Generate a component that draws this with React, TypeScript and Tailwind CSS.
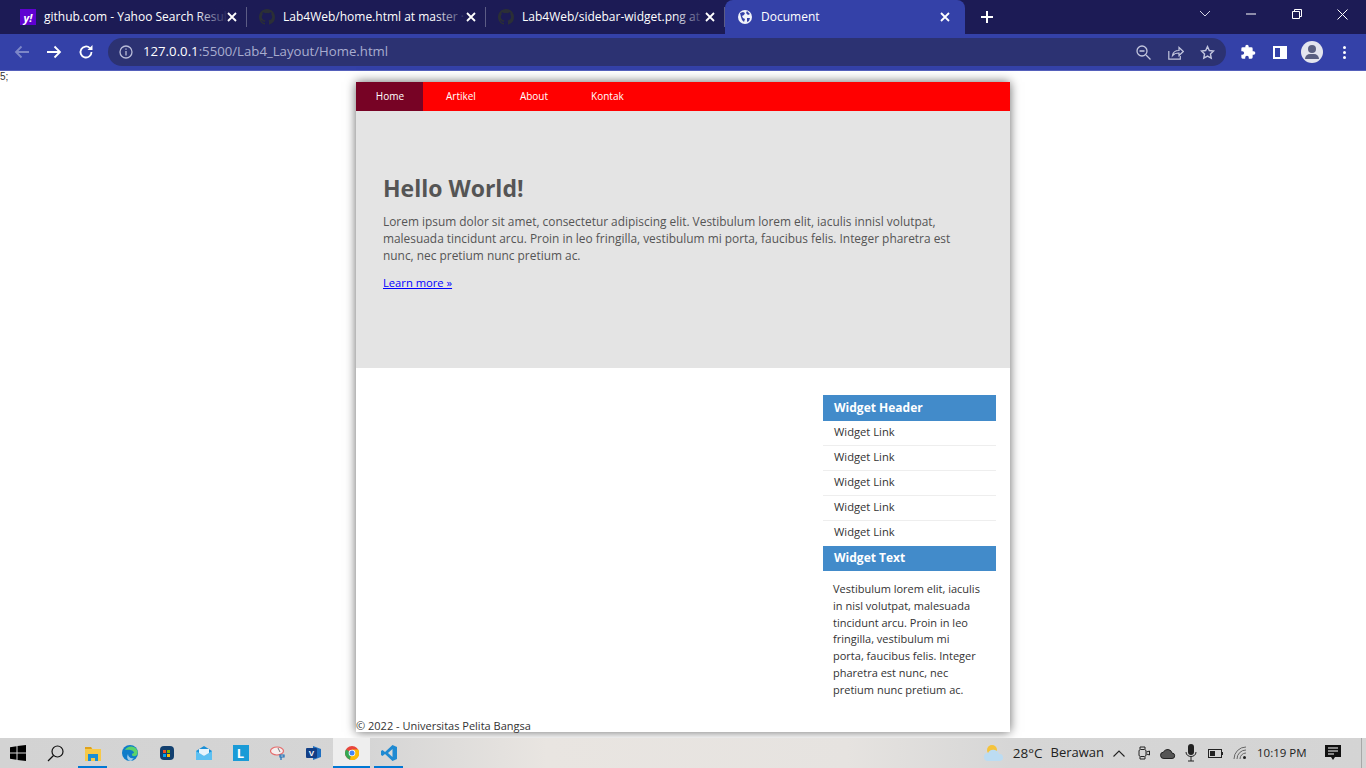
const FONT = "font-['Open_Sans',sans-serif]";

function GithubMark() {
  return (
    <svg width="16" height="16" viewBox="0 0 16 16" fill="#2b2f36">
      <path d="M8 0C3.58 0 0 3.58 0 8c0 3.54 2.29 6.53 5.47 7.59.4.07.55-.17.55-.38v-1.34c-2.23.48-2.7-1.07-2.7-1.07-.36-.92-.89-1.17-.89-1.17-.73-.5.05-.49.05-.49.8.06 1.23.83 1.23.83.71 1.22 1.87.87 2.33.66.07-.52.28-.87.5-1.07-1.77-.2-3.64-.89-3.64-3.95 0-.87.31-1.59.82-2.15-.08-.2-.36-1.02.08-2.12 0 0 .67-.21 2.2.82a7.6 7.6 0 0 1 4 0c1.53-1.04 2.2-.82 2.2-.82.44 1.1.16 1.92.08 2.12.51.56.82 1.27.82 2.15 0 3.07-1.87 3.75-3.65 3.95.29.25.54.73.54 1.48v2.2c0 .21.15.46.55.38A8 8 0 0 0 16 8c0-4.42-3.58-8-8-8z" />
    </svg>
  );
}

function CloseX() {
  return (
    <svg width="10" height="10" viewBox="0 0 10 10" stroke="#fff" strokeWidth="1.8" fill="none">
      <path d="M1 1l8 8M9 1l-8 8" />
    </svg>
  );
}

function Tab({ title, icon }: { title: string; icon: React.ReactNode }) {
  return (
    <div className="relative flex h-[34px] w-[239px] items-center pl-[12px]">
      <div className="flex h-4 w-4 shrink-0 items-center justify-center">{icon}</div>
      <div className="ml-2 w-[176px] whitespace-nowrap text-[12px] text-white">{title}</div>
      {/* the title fades out before the close button */}
      <div className="absolute left-[188px] top-0 h-full w-[32px] bg-gradient-to-r from-transparent to-[#1c1b55]" />
      <div className="relative ml-[7px] flex"><CloseX /></div>
      <div className="absolute right-0 top-[7px] h-[20px] w-px bg-[#5c5c85]" />
    </div>
  );
}

function TabBar() {
  return (
    <div className="flex h-[34px] items-start bg-[#1c1b55] pl-2">
      <Tab
        title="github.com - Yahoo Search Resul"
        icon={
          <div className="flex h-4 w-4 items-center justify-center bg-[#5f01d1] text-[11px] font-bold italic leading-none text-white">
            y!
          </div>
        }
      />
      <Tab title="Lab4Web/home.html at master ·" icon={<GithubMark />} />
      <Tab title="Lab4Web/sidebar-widget.png at" icon={<GithubMark />} />
      <div className="relative z-10 flex h-[37px] w-[240px] items-center rounded-t-lg bg-[#3441a8] pl-[13px] pb-[3px]">
        <svg width="14" height="14" viewBox="0 0 14 14">
          <circle cx="7" cy="7" r="7" fill="#f1f3fa" />
          <path d="M2 3l3-1 2 1-1 2-2 1 1 2 2 1-1 3-2-2-1-3zM9 1l3 3-2 1-2-2zM9 8l3 0-1 3-2 1z" fill="#3441a8" />
        </svg>
        <span className="ml-[9px] w-[179px] text-[12px] text-white">Document</span>
        <CloseX />
      </div>
      <div className="ml-[15px] flex h-[34px] items-center">
        <svg width="14" height="14" viewBox="0 0 14 14" stroke="#fff" strokeWidth="2">
          <path d="M7 1v12M1 7h12" />
        </svg>
      </div>
      <div className="ml-auto flex h-[28px] items-center">
        <svg className="mr-[35px]" width="12" height="8" viewBox="0 0 12 8" stroke="#d5d5e5" fill="none">
          <path d="M1 1l5 5 5-5" />
        </svg>
        <svg className="mr-[36px]" width="10" height="2" viewBox="0 0 10 2" stroke="#fff">
          <path d="M0 1h10" />
        </svg>
        <svg className="mr-[35px]" width="10" height="10" viewBox="0 0 10 10" stroke="#fff" fill="none">
          <path d="M.5 2.500h7v7h-7zM2.500 2.500V.5h7v7h-2" />
        </svg>
        <svg className="mr-[18px]" width="11" height="11" viewBox="0 0 11 11" stroke="#fff" fill="none">
          <path d="M.5.5l10 10M10.500.5l-10 10" />
        </svg>
      </div>
    </div>
  );
}

function ToolBar() {
  return (
    <div className="box-border flex h-[37px] items-center border-b border-[#5560bb] bg-[#3441a8] py-[4px] pl-[14px]">
      <svg width="16" height="14" viewBox="0 0 16 14" stroke="#7d87c8" strokeWidth="1.8" fill="none">
        <path d="M15 7H2M7.500 1.500L2 7l5.500 5.500" />
      </svg>
      <svg className="ml-[16px]" width="16" height="14" viewBox="0 0 16 14" stroke="#fff" strokeWidth="1.8" fill="none">
        <path d="M1 7h13M8.500 1.500L14 7l-5.500 5.500" />
      </svg>
      <svg className="ml-[16px]" width="16" height="16" viewBox="0 0 16 16" stroke="#fff" strokeWidth="1.8" fill="none">
        <path d="M13.500 8a5.500 5.500 0 1 1-1.600-3.900" />
        <path d="M14.500 1v5h-5z" fill="#fff" stroke="none" />
      </svg>
      <div className="ml-[14px] flex h-[28px] w-[1118px] items-center rounded-full bg-[#2c3272] pl-[11px]">
        <svg width="14" height="14" viewBox="0 0 14 14" fill="none" stroke="#b9bcd8" strokeWidth="1.300">
          <circle cx="7" cy="7" r="6" />
          <path d="M7 6v4.500M7 3.500v1.300" />
        </svg>
        <span className="ml-[10px] text-[13.200px] text-white">
          127.0.0.1<span className="text-[#a9adcf]">:5500/Lab4_Layout/Home.html</span>
        </span>
        <div className="ml-auto flex items-center pr-[11px]">
          <svg width="15" height="15" viewBox="0 0 15 15" fill="none" stroke="#c3c6de" strokeWidth="1.300">
            <circle cx="6" cy="6" r="5" />
            <path d="M3.500 6h5M10 10l4.500 4.500" />
          </svg>
          <svg className="ml-[17px]" width="16" height="15" viewBox="0 0 16 15" fill="none" stroke="#c3c6de" strokeWidth="1.200">
            <path d="M.8 6v8.200h11.500V11M4.500 10.500c.5-3.500 3-5 6.500-5V2.500l4.300 4-4.300 4V8c-2.500 0-5 .7-6.500 2.500z" />
          </svg>
          <svg className="ml-[16px]" width="15" height="15" viewBox="0 0 24 24" fill="none" stroke="#c3c6de" strokeWidth="2.200">
            <path d="M12 2.500l2.900 6.300 6.800.8-5 4.700 1.300 6.800-6-3.400-6 3.400 1.300-6.800-5-4.700 6.800-.8z" />
          </svg>
        </div>
      </div>
      <svg className="ml-[14px]" width="16" height="16" viewBox="0 0 24 24" fill="#fff">
        <path d="M20.500 11H19V7a2 2 0 0 0-2-2h-4V3.500a2.500 2.500 0 0 0-5 0V5H4a2 2 0 0 0-2 2v3.800h1.500a2.700 2.700 0 0 1 0 5.400H2V20a2 2 0 0 0 2 2h3.800v-1.500a2.700 2.700 0 0 1 5.400 0V22H17a2 2 0 0 0 2-2v-4h1.500a2.500 2.500 0 0 0 0-5z" />
      </svg>
      <div className="ml-[17px] flex h-[13px] w-[14px] justify-end border-2 border-white">
        <div className="h-full w-[5px] bg-white" />
      </div>
      <div className="relative ml-[14px] h-[22px] w-[22px] overflow-hidden rounded-full bg-[#e3e5ee]">
        <div className="absolute left-[7px] top-[4px] h-[8px] w-[8px] rounded-full bg-[#5a6080]" />
        <div className="absolute left-[4px] top-[13px] h-[5px] w-[14px] rounded-t-md bg-[#5a6080]" />
      </div>
      <div className="ml-[20px] flex flex-col gap-[2px]">
        <div className="h-[3px] w-[3px] rounded-full bg-white" />
        <div className="h-[3px] w-[3px] rounded-full bg-white" />
        <div className="h-[3px] w-[3px] rounded-full bg-white" />
      </div>
    </div>
  );
}

function Nav() {
  return (
    <nav className="flex h-[29px] items-center bg-[#ff0000] text-[10px] text-white">
      <a className="flex h-full w-[67px] items-center justify-center bg-[#770325] pl-px">Home</a>
      <a className="flex h-full items-center pl-[23px] pr-[23px]">Artikel</a>
      <a className="flex h-full items-center px-[21px]">About</a>
      <a className="flex h-full items-center px-[22px]">Kontak</a>
    </nav>
  );
}

function Sidebar() {
  return (
    <aside className="mt-[27px] ml-auto mr-[14px] w-[173px] text-[#333]">
      <h3 className="flex h-[26px] items-center bg-[#428bca] pl-[11px] text-[12px] font-bold text-white">Widget Header</h3>
      {[0, 1, 2, 3, 4].map((i) => (
        <div
          key={i}
          className={
            i < 4
              ? 'flex h-[25px] items-center border-b border-[#eeeeee] pb-px pl-[11px] text-[11.200px]'
              : 'flex h-[25px] items-center border-b border-transparent pb-px pl-[11px] text-[11.200px]'
          }
        >
          Widget Link
        </div>
      ))}
      <h3 className="flex h-[25px] items-center bg-[#428bca] pb-px pl-[11px] text-[12px] font-bold text-white">Widget Text</h3>
      <p className="mt-[10px] px-[10px] text-[11px] leading-[16.800px]">
        Vestibulum lorem elit, iaculis in nisl volutpat, malesuada tincidunt arcu. Proin in leo fringilla, vestibulum mi <br />
        porta, faucibus felis. Integer pharetra est nunc, nec pretium nunc pretium ac.
      </p>
    </aside>
  );
}

function Page() {
  return (
    <div className={`h-[667px] bg-white ${FONT}`}>
      <div className="h-[11px] font-['Liberation_Sans',sans-serif] text-[10px] leading-[11px] text-[#333]">5;</div>
      <div className="mx-auto h-[650px] w-[654px] bg-white text-[#333] shadow-[0_0_10px_rgba(0,0,0,0.6)]">
        <Nav />
        <section className="h-[257px] bg-[#e4e4e4] pl-[27px] pr-[40px] pt-[61px] text-[#555]">
          <h1 className="text-[23px] font-bold leading-[33px]">Hello World!</h1>
          <p className="mt-[8px] text-[11.900px] leading-[17px]">
            Lorem ipsum dolor sit amet, consectetur adipiscing elit. Vestibulum lorem elit, iaculis innisl volutpat, malesuada tincidunt arcu. Proin in leo fringilla, vestibulum mi porta, faucibus felis. Integer pharetra est nunc, nec pretium nunc pretium ac.
          </p>
          <a className="mt-[11px] block text-[11.200px] leading-[15px] text-[#0000ff] underline">Learn more »</a>
        </section>
        <div className="flex h-[343px]">
          <Sidebar />
        </div>
        <footer className="flex h-[21px] items-end text-[11px] leading-[12px] text-[#333]">© 2022 - Universitas Pelita Bangsa</footer>
      </div>
    </div>
  );
}

function TaskIcon({ children, active, running }: { children: React.ReactNode; active?: boolean; running?: boolean }) {
  return (
    <div className={active ? 'relative flex h-[30px] w-[37px] items-center justify-center bg-[#eeeeee]' : 'relative flex h-[30px] w-[37px] items-center justify-center'}>
      {children}
      {running && <div className={active ? 'absolute bottom-0 left-0 right-0 h-[2px] bg-[#0078d4]' : 'absolute bottom-0 left-[4px] right-[4px] h-[2px] bg-[#0078d4]'} />}
    </div>
  );
}

function TaskBar() {
  return (
    <div className={`flex h-[30px] items-center bg-[linear-gradient(90deg,#d3d3d3_0%,#d5d5d5_27%,#e9e5e1_40%,#e6e3e0_62%,#d6d6d6_74%,#d4d4d4_100%)] ${FONT}`}>
      <div className="flex w-[36px] justify-center">
        <svg width="16" height="16" viewBox="0 0 16 16" fill="#000">
          <path d="M0 2.300l6.500-1v6.200H0zM7.500 1.100L16 0v7.500H7.500zM0 8.500h6.500v6.200l-6.500-1zM7.500 8.500H16V16l-8.500-1.100z" />
        </svg>
      </div>
      <div className="flex w-[38px] justify-center">
        <svg width="17" height="17" viewBox="0 0 17 17" fill="none" stroke="#111" strokeWidth="1.200">
          <circle cx="10.500" cy="6.500" r="5.500" />
          <path d="M6.500 10.500L1 16" />
        </svg>
      </div>
      <TaskIcon running>
        <svg width="16" height="15" viewBox="0 0 16 15">
          <path d="M0 1h6l1.500 2H16v12H0z" fill="#f7c948" />
          <path d="M0 1h6l1 2H0z" fill="#dfa21b" />
          <path d="M3 8h10v7h-3v-3H6v3H3z" fill="#1a8fd6" />
        </svg>
      </TaskIcon>
      <TaskIcon>
        <svg width="16" height="16" viewBox="0 0 16 16">
          <circle cx="8" cy="8" r="8" fill="#0f7cc9" />
          <path d="M3 5c2-4 9-5 12 0 2 4-1 7-4 6-2-.5-1-3 1-3 0-3-5-4-9-3z" fill="#5bd36b" />
          <path d="M6 9c0 3 3 5 6 4l-3 3c-3 0-5-3-3-7z" fill="#fff" opacity="0.6" />
        </svg>
      </TaskIcon>
      <TaskIcon>
        <div className="relative h-[14px] w-[14px] rounded-sm bg-[#12406f]">
          <div className="absolute left-[3px] top-[4px] grid grid-cols-2 gap-px">
            <div className="h-[3px] w-[3px] bg-[#f25022]" />
            <div className="h-[3px] w-[3px] bg-[#7fba00]" />
            <div className="h-[3px] w-[3px] bg-[#00a4ef]" />
            <div className="h-[3px] w-[3px] bg-[#ffb900]" />
          </div>
        </div>
      </TaskIcon>
      <TaskIcon>
        <svg width="16" height="14" viewBox="0 0 16 14">
          <path d="M0 5l8-5 8 5v9H0z" fill="#1a8fd6" />
          <path d="M0 5l8 5 8-5v9H0z" fill="#5cc0f2" />
          <path d="M3 3h10v4l-5 3-5-3z" fill="#e6f4fc" />
        </svg>
      </TaskIcon>
      <TaskIcon>
        <div className="flex h-4 w-4 items-center justify-center bg-[#1a9bd7] text-[13px] font-bold leading-none text-white">L</div>
      </TaskIcon>
      <TaskIcon>
        <svg width="16" height="16" viewBox="0 0 16 16" fill="none">
          <ellipse cx="7" cy="6" rx="6.500" ry="4" stroke="#e56a6a" strokeWidth="1.200" fill="#f6eeee" />
          <path d="M8 3l2 4" stroke="#777" />
          <path d="M10 10h4v2h-4zM11 12v3" stroke="#1a6fb8" strokeWidth="1.200" />
        </svg>
      </TaskIcon>
      <TaskIcon>
        <svg width="17" height="16" viewBox="0 0 17 16">
          <path d="M7 1l8 3v8l-8 3z" fill="#1f6fc0" />
          <rect x="0" y="3" width="11" height="10" rx="1" fill="#123f86" />
          <text x="5.500" y="11" textAnchor="middle" fontSize="8" fontWeight="700" fill="#fff" fontFamily="Liberation Sans">V</text>
        </svg>
      </TaskIcon>
      <TaskIcon active running>
        <svg width="14" height="14" viewBox="0 0 14 14">
          <circle cx="7" cy="7" r="7" fill="#e8453c" />
          <path d="M7 7L1 3.500A7 7 0 0 0 5 13.700z" fill="#34a853" />
          <path d="M7 3.500h6.200A7 7 0 0 1 5 13.700z" fill="#fbbc05" />
          <circle cx="7" cy="7" r="3.300" fill="#fff" />
          <circle cx="7" cy="7" r="2.500" fill="#4285f4" />
        </svg>
      </TaskIcon>
      <TaskIcon running>
        <svg width="16" height="16" viewBox="0 0 16 16">
          <path d="M11.500 0L16 2v12l-4.500 2L4 9l-2.500 2L0 10V6l1.500-1L4 7z" fill="#1f8ad2" />
          <path d="M11.500 4L7 8l4.500 4z" fill="#d8d8d8" />
        </svg>
      </TaskIcon>

      <div className="ml-auto flex h-full items-center text-[#222]">
        <svg width="22" height="20" viewBox="0 0 22 20">
          <circle cx="9" cy="7" r="5" fill="#f5c33b" />
          <path d="M5 18a4 4 0 0 1 0-8 6 6 0 0 1 11 1 3.500 3.500 0 0 1 1 7z" fill="#bcdcf2" />
        </svg>
        <span className="ml-[8px] text-[13.500px]">28°C</span>
        <span className="ml-[8px] text-[13px]">Berawan</span>
        <svg className="ml-[9px]" width="12" height="7" viewBox="0 0 12 7" fill="none" stroke="#222" strokeWidth="1.100">
          <path d="M.5 6.500L6 1l5.500 5.500" />
        </svg>
        <svg className="ml-[13px]" width="12" height="16" viewBox="0 0 12 16" fill="none" stroke="#222">
          <path d="M2 4V2h5v2M2 12v2h5v-2" />
          <rect x="1" y="4.500" width="7" height="7" rx="1.500" />
          <path d="M8.500 7l3-1v4l-3-1" />
        </svg>
        <svg className="ml-[10px]" width="16" height="11" viewBox="0 0 16 11" fill="#555" stroke="#222">
          <path d="M4 10.500a3.200 3.200 0 0 1-.5-6.400 4.500 4.500 0 0 1 8.500 1 2.700 2.700 0 0 1 0 5.400z" />
        </svg>
        <svg className="ml-[9px]" width="12" height="18" viewBox="0 0 12 18" fill="none">
          <rect x="3" y="0" width="6" height="11" rx="3" fill="#222" />
          <path d="M1 8c0 6 10 6 10 0M6 13v4M3 17h6" stroke="#222" />
        </svg>
        <svg className="ml-[11px]" width="15" height="9" viewBox="0 0 15 9" fill="none" stroke="#222">
          <rect x=".5" y=".5" width="13" height="8" />
          <rect x="2" y="2" width="5" height="5" fill="#222" stroke="none" />
          <path d="M14.500 3v3" />
        </svg>
        <svg className="ml-[10px]" width="14" height="14" viewBox="0 0 14 14" fill="none" stroke="#666">
          <path d="M1 13A12 12 0 0 1 13 1M4 13a9 9 0 0 1 9-9M7 13a6 6 0 0 1 6-6" />
          <circle cx="11.500" cy="11.500" r="1.500" fill="#222" stroke="none" />
        </svg>
        <span className="ml-[10px] w-[49px] whitespace-nowrap text-[11.500px]">10:19 PM</span>
        <svg className="ml-[19px]" width="16" height="16" viewBox="0 0 16 16">
          <path d="M0 0h16v12H10l-2 3-2-3H0z" fill="#111" />
          <path d="M3 3h10M3 6h10M3 9h6" stroke="#fff" />
        </svg>
        <div className="ml-[20px] h-full w-[5px] border-l border-[#a8a8a8]" />
      </div>
    </div>
  );
}

export default function App() {
  return (
    <div className="h-[768px] w-[1366px] overflow-hidden font-['Open_Sans',sans-serif]">
      <TabBar />
      <ToolBar />
      <Page />
      <TaskBar />
    </div>
  );
}
